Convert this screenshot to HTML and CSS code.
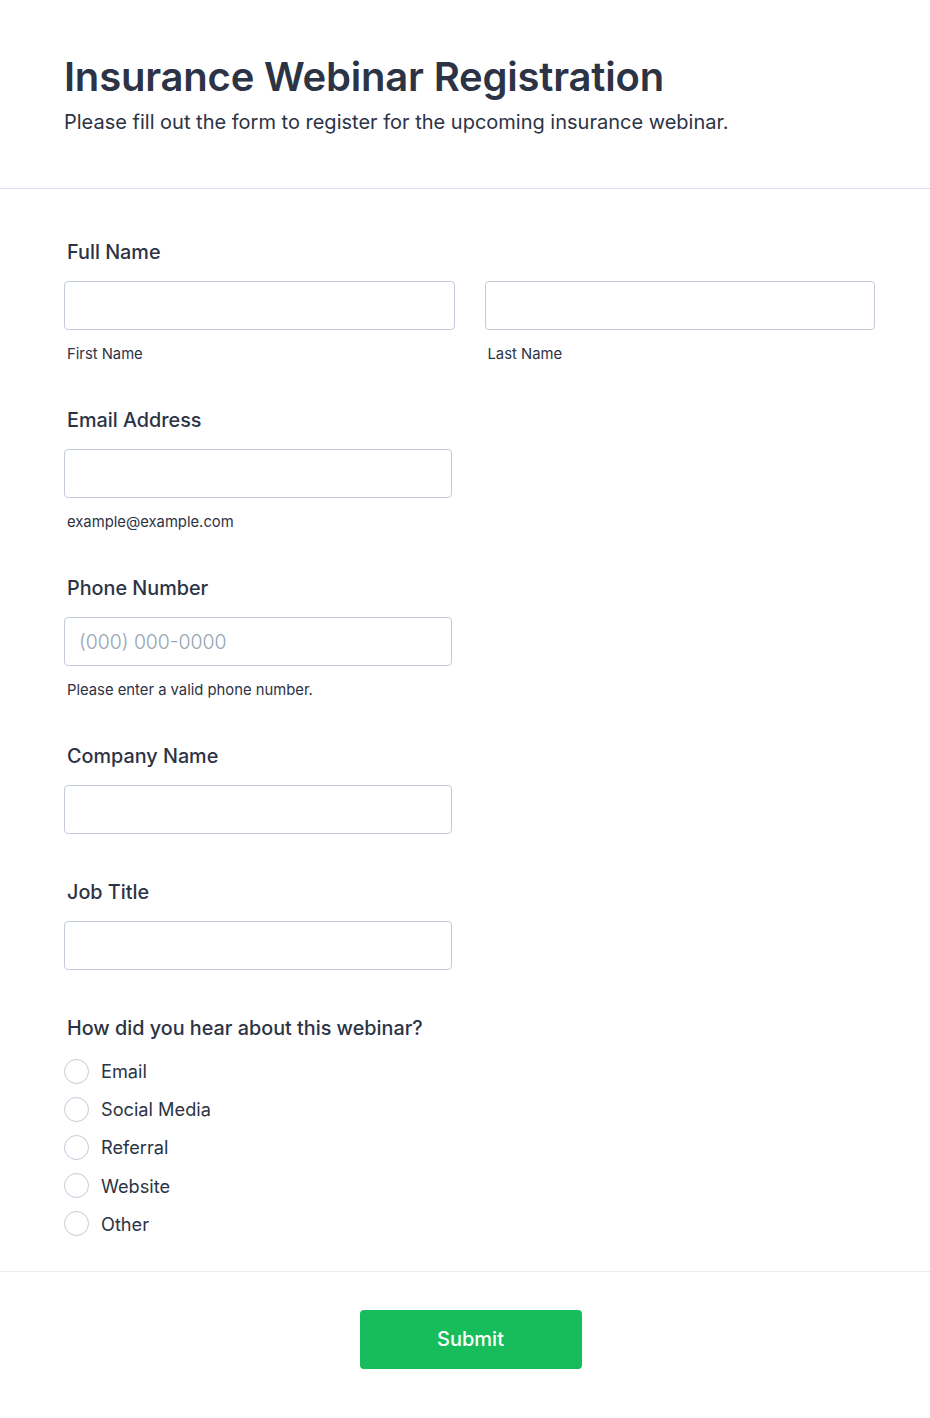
FILE: index.html
```html
<!DOCTYPE html>
<html lang="en">
<head>
    <meta charset="UTF-8">
    <meta name="viewport" content="width=device-width, initial-scale=1.0">
    <title>Insurance Webinar Registration</title>
    <link rel="stylesheet" href="styles.css">
</head>
<body>
    <!-- Header -->
    <div class="form-header">
        <h1>Insurance Webinar Registration</h1>
        <p>Please fill out the form to register for the upcoming insurance webinar.</p>
    </div>

    <form class="form-body">
        <!-- Full Name -->
        <div class="field">
            <label class="field-label">Full Name</label>
            <div class="name-row">
                <div class="name-col">
                    <input type="text" class="input">
                    <span class="sublabel">First Name</span>
                </div>
                <div class="name-col">
                    <input type="text" class="input">
                    <span class="sublabel">Last Name</span>
                </div>
            </div>
        </div>

        <!-- Email -->
        <div class="field">
            <label class="field-label">Email Address</label>
            <input type="email" class="input half">
            <span class="sublabel">example@example.com</span>
        </div>

        <!-- Phone -->
        <div class="field">
            <label class="field-label">Phone Number</label>
            <input type="tel" class="input half" placeholder="(000) 000-0000">
            <span class="sublabel">Please enter a valid phone number.</span>
        </div>

        <!-- Company -->
        <div class="field no-sub">
            <label class="field-label">Company Name</label>
            <input type="text" class="input half">
        </div>

        <!-- Job Title -->
        <div class="field no-sub">
            <label class="field-label">Job Title</label>
            <input type="text" class="input half">
        </div>

        <!-- Source -->
        <div class="field radios">
            <label class="field-label">How did you hear about this webinar?</label>
            <label class="radio"><input type="radio" name="source"><span>Email</span></label>
            <label class="radio"><input type="radio" name="source"><span>Social Media</span></label>
            <label class="radio"><input type="radio" name="source"><span>Referral</span></label>
            <label class="radio"><input type="radio" name="source"><span>Website</span></label>
            <label class="radio"><input type="radio" name="source"><span>Other</span></label>
        </div>
    </form>

    <!-- Submit -->
    <div class="form-footer">
        <button type="submit" class="submit">Submit</button>
    </div>
</body>
</html>
```

FILE: styles.css
```css
/* General Styling */
body {
    margin: 0;
    font-family: Inter, "Noto Sans", Arial, sans-serif;
    background-color: #fff;
    color: #2c3345;
}

/* Header */
.form-header {
    padding: 53px 64px 52px 64px;
    border-bottom: 1px solid #dcdcef;
}

.form-header h1 {
    margin: 0;
    font-size: 40px;
    line-height: 48px;
    font-weight: 600;
    letter-spacing: -0.2px;
}

.form-header p {
    margin: 7px 0 0 0;
    font-size: 20px;
    line-height: 28px;
}

/* Form Body */
.form-body {
    padding: 49px 55px 28px 64px;
    border-bottom: 1px solid #ebebf2;
}

.field {
    display: flex;
    flex-direction: column;
    align-items: flex-start;
    margin-bottom: 42px;
}

.field.no-sub {
    margin-bottom: 44px;
}

.field-label {
    margin: 0 0 15px 3px;
    font-size: 19.8px;
    line-height: 28px;
    font-weight: 500;
}

.name-row {
    display: flex;
    gap: 30px;
    width: 100%;
}

.name-col {
    flex: 1;
    display: flex;
    flex-direction: column;
}

.input {
    width: 100%;
    height: 49px;
    padding: 0 14px;
    box-sizing: border-box;
    border: 1px solid #c3cad8;
    border-radius: 4px;
    font-family: inherit;
    font-size: 19.4px;
    color: #2c3345;
    background-color: #fff;
}

.input.half {
    width: 388px;
}

.input::placeholder {
    color: #97a3b4;
    font-weight: 300;
}

.sublabel {
    margin: 14px 0 0 3px;
    font-size: 14.8px;
    line-height: 20px;
}

/* Radio Options */
.field.radios {
    margin-bottom: 0;
}

.field.radios .field-label {
    margin-bottom: 10px;
}

.radio {
    display: flex;
    align-items: center;
    height: 38.2px;
    font-size: 18.2px;
    cursor: pointer;
}

.radio input {
    appearance: none;
    width: 25px;
    height: 25px;
    margin: 0 12px 0 0;
    border: 1px solid #c3cad8;
    border-radius: 50%;
    background-color: #fff;
}

/* Footer */
.form-footer {
    display: flex;
    justify-content: center;
    padding: 38px 0 49px 0;
}

.submit {
    width: 222px;
    height: 59px;
    margin-left: 11px;
    border: none;
    border-radius: 4px;
    background-color: #18bd5b;
    color: #fff;
    font-family: inherit;
    font-size: 20px;
    font-weight: 500;
    cursor: pointer;
}
```
